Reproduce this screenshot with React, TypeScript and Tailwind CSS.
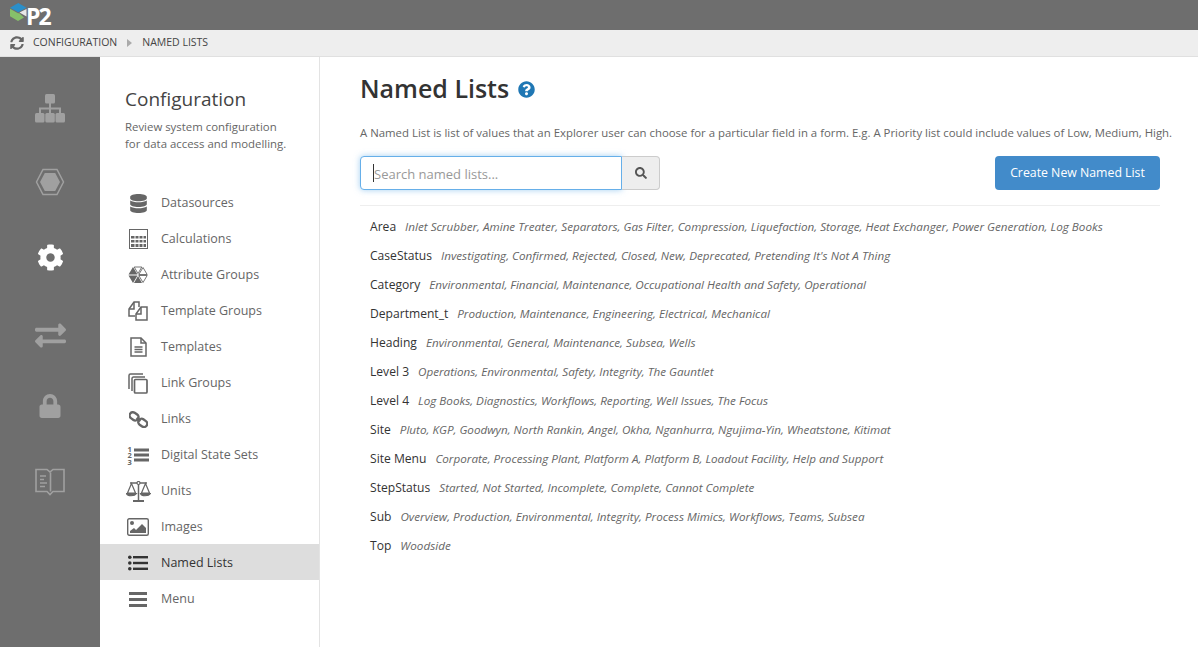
import React from "react";
import { FaCog, FaExchangeAlt, FaLock, FaSearch, FaQuestionCircle, FaDatabase, FaSyncAlt } from "react-icons/fa";

const ListIcon = () => (
  <svg width="20" height="16" viewBox="0 0 20 16" fill="currentColor">
    <circle cx="1.800" cy="2.200" r="1.800" /><circle cx="1.800" cy="8" r="1.800" /><circle cx="1.800" cy="13.800" r="1.800" />
    <rect x="5" y="1" width="15" height="2.400" /><rect x="5" y="6.800" width="15" height="2.400" /><rect x="5" y="12.600" width="15" height="2.400" />
  </svg>
);
const MenuIcon = () => (
  <svg width="18" height="15" viewBox="0 0 18 15" fill="currentColor">
    <rect y="0" width="18" height="3" /><rect y="6" width="18" height="3" /><rect y="12" width="18" height="3" />
  </svg>
);
const CalcIcon = () => (
  <svg width="19" height="20" viewBox="0 0 19 20" fill="none" stroke="currentColor">
    <rect x="0.500" y="0.500" width="18" height="19" />
    <g fill="currentColor" stroke="none">
      <rect x="2" y="7" width="3.500" height="2.500" /><rect x="6.500" y="7" width="3" height="2.500" /><rect x="10.500" y="7" width="3" height="2.500" /><rect x="14.500" y="7" width="2.500" height="2.500" />
      <rect x="2" y="11" width="3.500" height="2.500" /><rect x="6.500" y="11" width="3" height="2.500" /><rect x="10.500" y="11" width="3" height="2.500" /><rect x="14.500" y="11" width="2.500" height="2.500" />
      <rect x="2" y="15" width="3.500" height="3" /><rect x="6.500" y="15" width="3" height="3" /><rect x="10.500" y="15" width="3" height="3" /><rect x="14.500" y="15" width="2.500" height="3" />
    </g>
  </svg>
);
const AttrIcon = () => (
  <svg width="20" height="18" viewBox="0 0 20 18" fill="currentColor">
    <path d="M0.500 8.500L5 1l4.500 7.500z" />
    <path d="M0.500 9.500h9L5 17z" />
    <path d="M6 17h8l-4-7z" />
    <g fill="none" stroke="currentColor" strokeWidth="0.900">
      <path d="M6.200 1h7.600L10 7.600z" />
      <path d="M10.800 8.500L15 1.500l4.200 7z" />
      <path d="M10.800 9.500h8.400L15 16.500z" />
    </g>
  </svg>
);
const TplGroupIcon = () => (
  <svg width="20" height="20" viewBox="0 0 20 20" fill="none" stroke="currentColor" strokeWidth="1.500">
    <path d="M7 15H1V8l5-7h5v5" /><path d="M1 8h5V1" />
    <path d="M8 13l5-7h6v13H8z" /><path d="M8 13h5V6" />
  </svg>
);
const DocIcon = () => (
  <svg width="17" height="20" viewBox="0 0 17 20" fill="none" stroke="currentColor" strokeWidth="1.500">
    <path d="M1 1h10l5 5v13H1z" /><path d="M11 1v5h5" />
    <path d="M4.500 10h8M4.500 12.500h8M4.500 15h8" />
  </svg>
);
const LinkGroupIcon = () => (
  <svg width="20" height="21" viewBox="0 0 20 21" fill="none" stroke="currentColor" strokeWidth="1.500">
    <path d="M1 16V2.500A1.500 1.500 0 0 1 2.500 1H15" />
    <path d="M4 18V5.500A1.500 1.500 0 0 1 5.500 4H17" />
    <rect x="6.500" y="6.500" width="12.500" height="13.500" rx="1" strokeWidth="1.700" />
  </svg>
);
const LinkIcon = () => (
  <svg width="19" height="17" viewBox="0 0 19 17" fill="none" stroke="currentColor" strokeWidth="2.400">
    <g transform="rotate(35 5 5)"><rect x="0.500" y="2" width="9.500" height="6.500" rx="3.200" /></g>
    <g transform="rotate(35 14 12)"><rect x="9" y="8.800" width="9.500" height="6.500" rx="3.200" /></g>
    <path d="M7.500 7l4 3" />
  </svg>
);
const NumListIcon = () => (
  <svg width="22" height="20" viewBox="0 0 22 20" fill="currentColor">
    <rect x="7" y="3.500" width="15" height="3" /><rect x="7" y="8.500" width="15" height="3" /><rect x="7" y="13.500" width="15" height="3" />
    <text x="0.500" y="6.500" fontSize="7.500" fontWeight="700" fontFamily="'Open Sans',sans-serif">1</text>
    <text x="0.500" y="13" fontSize="7.500" fontWeight="700" fontFamily="'Open Sans',sans-serif">2</text>
    <text x="0.500" y="19.500" fontSize="7.500" fontWeight="700" fontFamily="'Open Sans',sans-serif">3</text>
  </svg>
);
const ScaleIcon = () => (
  <svg width="25" height="21" viewBox="0 0 25 21" fill="none" stroke="currentColor" strokeWidth="1.200">
    <path d="M4 2h17" strokeWidth="1.500" />
    <circle cx="12.500" cy="2" r="1.500" fill="white" />
    <path d="M12.500 3.500V19" strokeWidth="1.500" />
    <path d="M7 20h11" strokeWidth="2" />
    <path d="M5.500 2.500L1.500 12h8z" />
    <path d="M19.500 2.500L15.500 12h8z" />
    <path d="M0.500 12.500c1 3 8 3 10 0z" fill="currentColor" />
    <path d="M14.500 12.500c1 3 8 3 10 0z" fill="currentColor" />
  </svg>
);
const ImageIcon = () => (
  <svg width="22" height="18" viewBox="0 0 22 18">
    <rect x="0.700" y="0.700" width="20.600" height="16.600" rx="1.500" fill="none" stroke="currentColor" strokeWidth="1.400" />
    <circle cx="5" cy="5" r="2" fill="currentColor" />
    <path d="M3 15v-2l4-3 2 2 6-6 4 4v5z" fill="currentColor" />
  </svg>
);
const Sitemap = () => (
  <svg width="32" height="29" viewBox="0 0 32 29" fill="#a0a0a0">
    <rect x="11" y="0" width="10" height="9.500" rx="1.500" />
    <rect x="1" y="19" width="9.500" height="9.500" rx="1.500" />
    <rect x="11.300" y="19" width="9.500" height="9.500" rx="1.500" />
    <rect x="21.500" y="19" width="9.500" height="9.500" rx="1.500" />
    <path d="M15 9h2v4.500h10V19h-2v-3.500h-8V19h-2v-3.500H7V19H5v-5.500h10z" />
  </svg>
);
const Hex = () => (
  <svg width="30" height="28" viewBox="0 0 30 28" fill="#a0a0a0">
    <path d="M8 1.500h14L28.500 14 22 26.500H8L1.500 14z" fill="none" stroke="#a0a0a0" strokeWidth="1.500" />
    <path d="M9.800 5h10.400L25 14l-4.800 9H9.800L5 14z" />
  </svg>
);
const Book = () => (
  <svg width="30" height="28" viewBox="0 0 30 28" fill="none" stroke="#a0a0a0" strokeWidth="1.600">
    <path d="M1 1.500h11l3 2.500 3-2.500h11v22H18l-3 3-3-3H1z" />
    <path d="M15.500 4.500v19" />
    <path d="M5 8h6M5 11.500h4M5 15h7M5 18.500h5" strokeWidth="1.600" />
  </svg>
);
const Logo = () => (
  <svg width="17" height="18" viewBox="0 0 17 18">
    <path d="M0 4.800L8.300 0 16.500 4.800 8.300 9.300z" fill="#2a8fc9" />
    <path d="M0 5.800L8 10.300 8 18 0 13.300z" fill="#86c06a" />
    <path d="M8 10.500l1-.6 5 4.600L8 18z" fill="#86c06a" />
    <path d="M16.500 6L9.500 9.600 16.500 13.500z" fill="#e8e8e8" />
  </svg>
);

const nav: [string, React.ReactNode, boolean?][] = [
  ["Datasources", <FaDatabase size={19} />],
  ["Calculations", <CalcIcon />],
  ["Attribute Groups", <AttrIcon />],
  ["Template Groups", <TplGroupIcon />],
  ["Templates", <DocIcon />],
  ["Link Groups", <LinkGroupIcon />],
  ["Links", <LinkIcon />],
  ["Digital State Sets", <NumListIcon />],
  ["Units", <ScaleIcon />],
  ["Images", <ImageIcon />],
  ["Named Lists", <ListIcon />, true],
  ["Menu", <MenuIcon />],
];

const rows: [string, string][] = [
  ["Area", "Inlet Scrubber, Amine Treater, Separators, Gas Filter, Compression, Liquefaction, Storage, Heat Exchanger, Power Generation, Log Books"],
  ["CaseStatus", "Investigating, Confirmed, Rejected, Closed, New, Deprecated, Pretending It's Not A Thing"],
  ["Category", "Environmental, Financial, Maintenance, Occupational Health and Safety, Operational"],
  ["Department_t", "Production, Maintenance, Engineering, Electrical, Mechanical"],
  ["Heading", "Environmental, General, Maintenance, Subsea, Wells"],
  ["Level 3", "Operations, Environmental, Safety, Integrity, The Gauntlet"],
  ["Level 4", "Log Books, Diagnostics, Workflows, Reporting, Well Issues, The Focus"],
  ["Site", "Pluto, KGP, Goodwyn, North Rankin, Angel, Okha, Nganhurra, Ngujima-Yin, Wheatstone, Kitimat"],
  ["Site Menu", "Corporate, Processing Plant, Platform A, Platform B, Loadout Facility, Help and Support"],
  ["StepStatus", "Started, Not Started, Incomplete, Complete, Cannot Complete"],
  ["Sub", "Overview, Production, Environmental, Integrity, Process Mimics, Workflows, Teams, Subsea"],
  ["Top", "Woodside"],
];

export default function App() {
  return (
    <div className="h-[647px] w-[1198px] overflow-hidden bg-white font-['Open_Sans',sans-serif] text-[#333]">
      <header className="flex h-[30px] items-start overflow-hidden bg-[#6e6e6e] pl-[10px] pt-[3px]">
        <Logo />
        <span className="-ml-[1px] text-[23px] font-bold leading-[27px] tracking-[-2px] text-white">P2</span>
      </header>
      <div className="flex h-[27px] items-center border-b border-[#e0e0e0] bg-[#eeeeee] pl-[10px] text-[10.500px] text-[#444]">
        <FaSyncAlt size={14} className="text-[#666]" />
        <span className="ml-[9px]">CONFIGURATION</span>
        <span className="ml-[10px] mr-[10px] h-0 w-0 border-y-[4px] border-l-[5px] border-y-transparent border-l-[#aaa]" />
        <span>NAMED LISTS</span>
      </div>
      <div className="flex h-[590px]">
        <aside className="flex w-[100px] shrink-0 flex-col items-center bg-[#6e6e6e] pt-[14px] text-[#a0a0a0]">
          <div className="flex h-[74px] w-full items-center justify-center"><Sitemap /></div>
          <div className="flex h-[74px] w-full items-center justify-center"><Hex /></div>
          <div className="flex h-[76px] w-full items-center justify-center text-white"><FaCog size={27} /></div>
          <div className="flex h-[80px] w-full items-center justify-center"><FaExchangeAlt size={31} /></div>
          <div className="flex h-[62px] w-full items-center justify-center"><FaLock size={24} /></div>
          <div className="flex h-[90px] w-full items-center justify-center"><Book /></div>
        </aside>
        <nav className="w-[220px] shrink-0 border-r border-[#e3e3e3]">
          <h2 className="ml-[25px] mt-[29px] text-[19px] leading-[26px] text-[#444]">Configuration</h2>
          <p className="ml-[25px] mt-[6px] text-[11.400px] leading-[17px] text-[#666]">Review system configuration<br />for data access and modelling.</p>
          <ul className="mt-[32px]">
            {nav.map(([label, icon, active]) => (
              <li key={label} className={`flex h-[36px] items-center pt-[2px] text-[12.500px] ${active ? "bg-[#dddddd] text-[#333]" : "text-[#666]"}`}>
                <span className={`flex w-[61px] justify-center pl-[16px] pr-[1px] ${active ? "text-[#333]" : "text-[#666]"}`}>{icon}</span>
                <span>{label}</span>
              </li>
            ))}
          </ul>
        </nav>
        <main className="min-w-0 flex-1 pl-[40px] pr-[38px]">
          <div className="mt-[12px] flex items-center">
            <h1 className="text-[25px] font-[550] leading-[38px] text-[#333]">Named Lists</h1>
            <FaQuestionCircle size={17} className="ml-[9px] mt-[3px] text-[#1f77b4]" />
          </div>
          <p className="mt-[17px] whitespace-nowrap text-[11.400px] leading-[17px] text-[#666]">A Named List is list of values that an Explorer user can choose for a particular field in a form. E.g. A Priority list could include values of Low, Medium, High.</p>
          <div className="mt-[15px] flex items-center justify-between">
            <div className="flex h-[34px]">
              <div className="flex w-[262px] items-center rounded-l-[4px] border border-[#66afe9] bg-white pl-[12px] text-[13px] text-[#999] shadow-[0_0_6px_rgba(102,175,233,0.6)]">
                <span className="h-[18px] w-px bg-[#333]" />
                <span className="pt-[3px]">Search named lists...</span>
              </div>
              <div className="flex w-[38px] items-center justify-center rounded-r-[4px] border border-l-0 border-[#ccc] bg-[#eeeeee] text-[#555]">
                <FaSearch size={12} />
              </div>
            </div>
            <button className="h-[34px] w-[165px] rounded-[4px] bg-[#428bca] text-[12.300px] text-white">Create New Named List</button>
          </div>
          <hr className="mt-[15px] border-[#eeeeee]" />
          <ul className="mt-[7px] pl-[10px]">
            {rows.map(([name, values]) => (
              <li key={name} className="flex h-[29px] items-center whitespace-nowrap">
                <span className="text-[12.100px] text-[#333]">{name}</span>
                <span className="ml-[9px] pb-[2px] text-[11.680px] italic text-[#666]">{values}</span>
              </li>
            ))}
          </ul>
        </main>
      </div>
    </div>
  );
}
